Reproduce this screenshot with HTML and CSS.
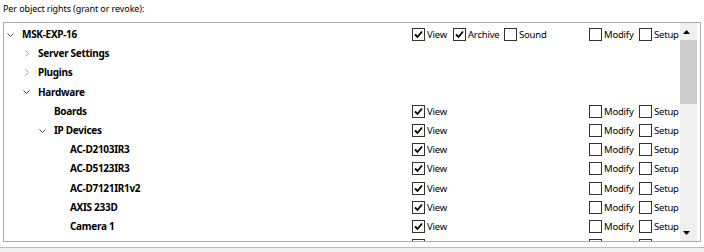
FILE: index.html
```html
<!DOCTYPE html>
<html lang="en">
  <head>
    <meta charset="UTF-8" />
    <title>Per object rights</title>
    <link rel="stylesheet" href="styles.css">
  </head>
  <body>
    <div class="caption">Per object rights (grant or revoke):</div>

    <div class="panel">
      <div class="tree">
        <div class="row lvl0">
          <span class="twisty open"><svg width="7" height="4" viewBox="0 0 7 4"><path d="M0.5 0.5 L3.5 3.5 L6.5 0.5" /></svg></span>
          <span class="name">MSK-EXP-16</span>
          <label class="perm p-view"><span class="cb on"><svg viewBox="0 0 11 11"><path d="M2 5.5 L4.5 8 L9 2.5" /></svg></span>View</label>
          <label class="perm p-archive"><span class="cb on"><svg viewBox="0 0 11 11"><path d="M2 5.5 L4.5 8 L9 2.5" /></svg></span>Archive</label>
          <label class="perm p-sound"><span class="cb"></span>Sound</label>
          <label class="perm p-modify"><span class="cb"></span>Modify</label>
          <label class="perm p-setup"><span class="cb"></span>Setup</label>
        </div>

        <div class="row lvl1">
          <span class="twisty shut"><svg width="4" height="7" viewBox="0 0 4 7"><path d="M0.5 0.5 L3.5 3.5 L0.5 6.5" /></svg></span>
          <span class="name">Server Settings</span>
        </div>

        <div class="row lvl1">
          <span class="twisty shut"><svg width="4" height="7" viewBox="0 0 4 7"><path d="M0.5 0.5 L3.5 3.5 L0.5 6.5" /></svg></span>
          <span class="name">Plugins</span>
        </div>

        <div class="row lvl1">
          <span class="twisty open"><svg width="7" height="4" viewBox="0 0 7 4"><path d="M0.5 0.5 L3.5 3.5 L6.5 0.5" /></svg></span>
          <span class="name">Hardware</span>
        </div>

        <div class="row lvl2">
          <span class="twisty"></span>
          <span class="name">Boards</span>
          <label class="perm p-view"><span class="cb on"><svg viewBox="0 0 11 11"><path d="M2 5.5 L4.5 8 L9 2.5" /></svg></span>View</label>
          <label class="perm p-modify"><span class="cb"></span>Modify</label>
          <label class="perm p-setup"><span class="cb"></span>Setup</label>
        </div>

        <div class="row lvl2">
          <span class="twisty open"><svg width="7" height="4" viewBox="0 0 7 4"><path d="M0.5 0.5 L3.5 3.5 L6.5 0.5" /></svg></span>
          <span class="name">IP Devices</span>
          <label class="perm p-view"><span class="cb on"><svg viewBox="0 0 11 11"><path d="M2 5.5 L4.5 8 L9 2.5" /></svg></span>View</label>
          <label class="perm p-modify"><span class="cb"></span>Modify</label>
          <label class="perm p-setup"><span class="cb"></span>Setup</label>
        </div>

        <div class="row lvl3">
          <span class="twisty"></span>
          <span class="name">AC-D2103IR3</span>
          <label class="perm p-view"><span class="cb on"><svg viewBox="0 0 11 11"><path d="M2 5.5 L4.5 8 L9 2.5" /></svg></span>View</label>
          <label class="perm p-modify"><span class="cb"></span>Modify</label>
          <label class="perm p-setup"><span class="cb"></span>Setup</label>
        </div>

        <div class="row lvl3">
          <span class="twisty"></span>
          <span class="name">AC-D5123IR3</span>
          <label class="perm p-view"><span class="cb on"><svg viewBox="0 0 11 11"><path d="M2 5.5 L4.5 8 L9 2.5" /></svg></span>View</label>
          <label class="perm p-modify"><span class="cb"></span>Modify</label>
          <label class="perm p-setup"><span class="cb"></span>Setup</label>
        </div>

        <div class="row lvl3">
          <span class="twisty"></span>
          <span class="name">AC-D7121IR1v2</span>
          <label class="perm p-view"><span class="cb on"><svg viewBox="0 0 11 11"><path d="M2 5.5 L4.5 8 L9 2.5" /></svg></span>View</label>
          <label class="perm p-modify"><span class="cb"></span>Modify</label>
          <label class="perm p-setup"><span class="cb"></span>Setup</label>
        </div>

        <div class="row lvl3">
          <span class="twisty"></span>
          <span class="name">AXIS 233D</span>
          <label class="perm p-view"><span class="cb on"><svg viewBox="0 0 11 11"><path d="M2 5.5 L4.5 8 L9 2.5" /></svg></span>View</label>
          <label class="perm p-modify"><span class="cb"></span>Modify</label>
          <label class="perm p-setup"><span class="cb"></span>Setup</label>
        </div>

        <div class="row lvl3">
          <span class="twisty"></span>
          <span class="name">Camera 1</span>
          <label class="perm p-view"><span class="cb on"><svg viewBox="0 0 11 11"><path d="M2 5.5 L4.5 8 L9 2.5" /></svg></span>View</label>
          <label class="perm p-modify"><span class="cb"></span>Modify</label>
          <label class="perm p-setup"><span class="cb"></span>Setup</label>
        </div>

        <div class="row lvl3">
          <span class="twisty"></span>
          <span class="name"></span>
          <span class="perm p-view"><span class="cb"></span></span>
          <span class="perm p-modify"><span class="cb"></span></span>
          <span class="perm p-setup"><span class="cb"></span></span>
        </div>
      </div>

      <div class="scrollbar">
        <span class="arrow"><svg width="7" height="4" viewBox="0 0 7 4"><path d="M0 4 L3.5 0 L7 4 Z" /></svg></span>
        <div class="track">
          <div class="thumb"></div>
        </div>
        <span class="arrow"><svg width="7" height="4" viewBox="0 0 7 4"><path d="M0 0 L3.5 4 L7 0 Z" /></svg></span>
      </div>
    </div>

    <div class="footer"></div>
  </body>
</html>
```

FILE: styles.css
```css
:root {
  --text: #000;
  --border: #acacac;
  --box: #333;
  --track: #f0f0f0;
  --thumb: #cdcdcd;
  --arrow: #000;
}

* {
  margin: 0;
  padding: 0;
  box-sizing: border-box;
}

html,
body {
  height: 100%;
}

body {
  display: flex;
  flex-direction: column;
  background: #fff;
  color: var(--text);
  font-family: "Noto Sans", "Open Sans", sans-serif;
  font-size: 10px;
  overflow: hidden;
}

.caption {
  height: 22px;
  padding: 1px 0 0 3px;
  font-size: 9px;
  letter-spacing: -0.1px;
  line-height: 15px;
}

.panel {
  display: flex;
  height: 220px;
  margin: 0 3px;
  border: 1px solid var(--border);
}

.tree {
  flex: 1;
  padding-top: 2px;
  overflow: hidden;
}

.row {
  display: grid;
  grid-template-columns: 18px 390px 41px 51px 85px 50px 1fr;
  align-items: center;
  height: 19.2px;
  white-space: nowrap;
}

.lvl1 {
  padding-left: 16px;
  grid-template-columns: 18px 374px 41px 51px 85px 50px 1fr;
}

.lvl2 {
  padding-left: 32px;
  grid-template-columns: 18px 358px 41px 51px 85px 50px 1fr;
}

.lvl3 {
  padding-left: 48px;
  grid-template-columns: 18px 342px 41px 51px 85px 50px 1fr;
}

.twisty {
  display: flex;
  align-items: center;
  height: 100%;
}

.twisty svg {
  fill: none;
  stroke-width: 1;
}

.twisty.open {
  padding-left: 3px;
}

.twisty.open svg {
  stroke: #404040;
}

.twisty.shut {
  padding-left: 5px;
}

.twisty.shut svg {
  stroke: #a6a6a6;
}

.name {
  font-weight: 700;
  letter-spacing: -0.3px;
  line-height: 15px;
}

.perm {
  display: flex;
  align-items: center;
  gap: 2px;
  font-size: 9.5px;
  letter-spacing: -0.2px;
  line-height: 15px;
}

.p-view {
  grid-column: 3;
}

.p-archive {
  grid-column: 4;
}

.p-sound {
  grid-column: 5;
}

.p-modify {
  grid-column: 6;
}

.p-setup {
  grid-column: 7;
}

.cb {
  display: flex;
  align-items: center;
  justify-content: center;
  width: 13px;
  height: 13px;
  border: 1px solid var(--box);
  background: #fff;
}

.cb svg {
  width: 11px;
  height: 11px;
  fill: none;
  stroke: #000;
  stroke-width: 1.8;
}

.scrollbar {
  display: flex;
  flex-direction: column;
  width: 17px;
  margin-right: 3px;
  background: var(--track);
}

.arrow {
  display: flex;
  align-items: center;
  justify-content: center;
  height: 17px;
  padding-right: 4px;
}

.arrow svg {
  fill: var(--arrow);
}

.track {
  flex: 1;
}

.thumb {
  height: 64px;
  background: var(--thumb);
}

.footer {
  flex: 1;
  margin-top: 5px;
  border-top: 1px solid #b4bcc8;
  background: var(--track);
}
```
